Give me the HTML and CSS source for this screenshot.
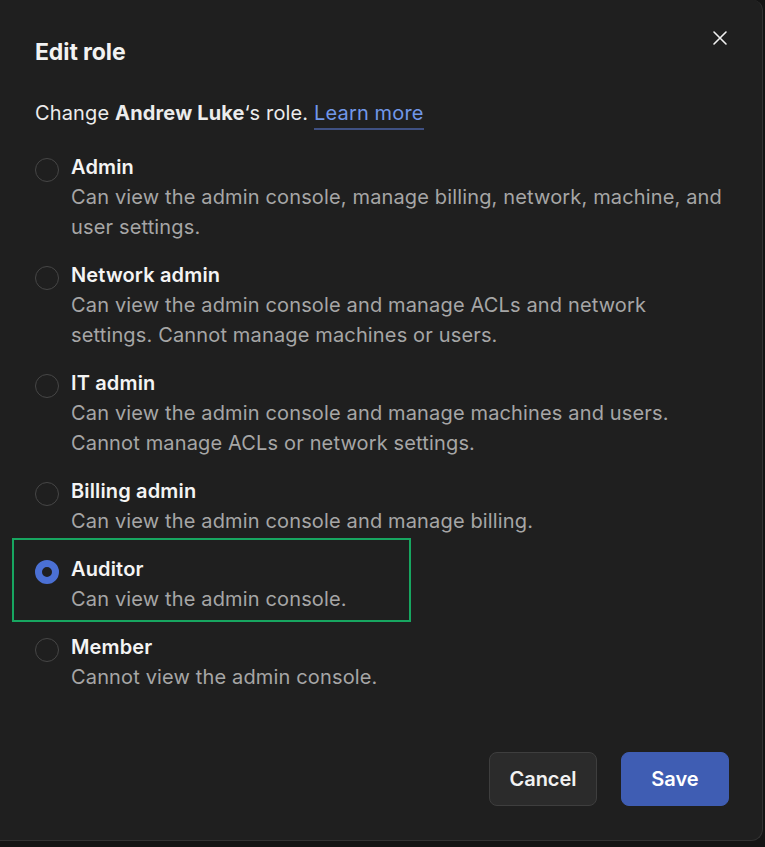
FILE: index.html
```html
<!DOCTYPE html>
<html lang="en">
<head>
  <meta charset="UTF-8">
  <meta name="viewport" content="width=device-width, initial-scale=1.0">
  <title>Edit role</title>
  <link rel="stylesheet" href="styles.css">
</head>
<body>
  <div class="dialog">
    <button class="close-button" aria-label="Close">
      <svg width="16" height="16" viewBox="0 0 16 16" fill="none" stroke="currentColor" stroke-width="1.6" stroke-linecap="round">
        <path d="M2 2 L14 14 M14 2 L2 14"/>
      </svg>
    </button>

    <h1 class="dialog-title">Edit role</h1>
    <p class="intro">Change <strong>Andrew Luke</strong>‘s role. <a href="#" class="learn-more">Learn more</a></p>

    <div class="role-list">
      <label class="role">
        <span class="radio"></span>
        <span class="role-text">
          <span class="role-name">Admin</span>
          <span class="role-desc">Can view the admin console, manage billing, network, machine, and user settings.</span>
        </span>
      </label>
      <label class="role">
        <span class="radio"></span>
        <span class="role-text">
          <span class="role-name">Network admin</span>
          <span class="role-desc">Can view the admin console and manage ACLs and network settings. Cannot manage machines or users.</span>
        </span>
      </label>
      <label class="role">
        <span class="radio"></span>
        <span class="role-text">
          <span class="role-name">IT admin</span>
          <span class="role-desc">Can view the admin console and manage machines and users. Cannot manage ACLs or network settings.</span>
        </span>
      </label>
      <label class="role">
        <span class="radio"></span>
        <span class="role-text">
          <span class="role-name">Billing admin</span>
          <span class="role-desc">Can view the admin console and manage billing.</span>
        </span>
      </label>
      <label class="role role-selected highlight">
        <span class="radio"></span>
        <span class="role-text">
          <span class="role-name">Auditor</span>
          <span class="role-desc">Can view the admin console.</span>
        </span>
      </label>
      <label class="role">
        <span class="radio"></span>
        <span class="role-text">
          <span class="role-name">Member</span>
          <span class="role-desc">Cannot view the admin console.</span>
        </span>
      </label>
    </div>

    <div class="actions">
      <button class="button button-secondary">Cancel</button>
      <button class="button button-primary">Save</button>
    </div>
  </div>
</body>
</html>
```

FILE: styles.css
```css
body {
  margin: 0;
  padding: 0;
  background: #141414;
  font-family: 'Inter', 'Noto Sans', sans-serif;
  color: #f2f2f2;
}

.dialog {
  position: relative;
  box-sizing: border-box;
  width: 763px;
  height: 841px;
  padding: 36px 33px 0 35px;
  background: #1f1f1f;
  border-right: 1px solid #323232;
  border-bottom: 1px solid #323232;
  border-radius: 0 10px 12px 0;
}

.close-button {
  position: absolute;
  top: 30px;
  right: 34px;
  padding: 0;
  background: none;
  border: none;
  color: #f0f0f0;
  cursor: pointer;
  display: flex;
}

.dialog-title {
  margin: 0;
  font-size: 23px;
  line-height: 32px;
  font-weight: 700;
  letter-spacing: -0.1px;
}

.intro {
  margin: 30px 0 0;
  font-size: 20px;
  line-height: 30px;
  letter-spacing: 0.15px;
  color: #ececec;
}

.intro strong {
  font-weight: 700;
}

.learn-more {
  color: #7197e9;
  text-decoration: none;
  padding-bottom: 3px;
  border-bottom: 2px solid #3f5082;
}

.role-list {
  margin-top: 24px;
  display: flex;
  flex-direction: column;
  gap: 18px;
}

.role {
  position: relative;
  display: flex;
  align-items: flex-start;
  gap: 12px;
  cursor: pointer;
}

.radio {
  flex: none;
  box-sizing: border-box;
  width: 24px;
  height: 24px;
  margin-top: 6px;
  border: 1px solid #464646;
  border-radius: 50%;
}

.role-selected .radio {
  border: 7px solid #4b70d4;
  background: #1f1f1f;
}

.role-text {
  display: flex;
  flex-direction: column;
  font-size: 20px;
  line-height: 30px;
  letter-spacing: 0.15px;
}

.role-name {
  font-weight: 600;
  color: #f4f4f4;
}

.role-desc {
  color: #a6a6a6;
}

/* Annotation box round the selected role */
.highlight::after {
  content: '';
  position: absolute;
  box-sizing: border-box;
  top: -16px;
  bottom: -8px;
  left: -23px;
  width: 399px;
  border: 2px solid #17a660;
  pointer-events: none;
}

.actions {
  margin-top: 60px;
  display: flex;
  justify-content: flex-end;
  gap: 24px;
}

.button {
  box-sizing: border-box;
  width: 108px;
  height: 54px;
  border-radius: 8px;
  font-family: inherit;
  font-size: 20px;
  font-weight: 600;
  cursor: pointer;
}

.button-secondary {
  background: #2b2b2b;
  border: 1px solid #3e3e3e;
  color: #f2f2f2;
}

.button-primary {
  background: #3f5db3;
  border: 1px solid #3f5db3;
  color: #ffffff;
}
```
